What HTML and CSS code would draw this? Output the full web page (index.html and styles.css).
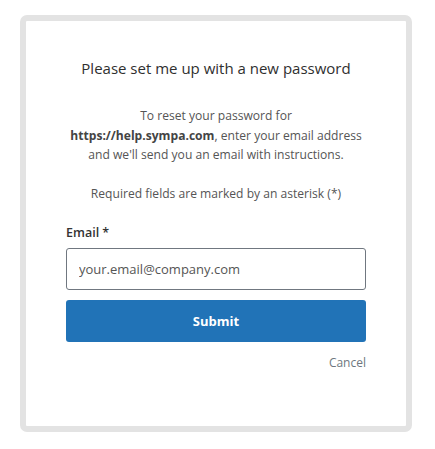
FILE: index.html
```html
<!DOCTYPE html>
<html lang="en">
<head>
<meta charset="utf-8">
<title>Reset password</title>
<link rel="stylesheet" href="styles.css">
</head>
<body>
<div class="card">
  <h1 class="title">Please set me up with a new password</h1>
  <p class="intro">To reset your password for<br><strong>https://help.sympa.com</strong>, enter your email address<br>and we'll send you an email with instructions.</p>
  <p class="required">Required fields are marked by an asterisk (*)</p>
  <label class="label" for="email">Email *</label>
  <input class="input" id="email" type="text" placeholder="your.email@company.com">
  <button class="submit" type="button">Submit</button>
  <div class="cancel-row"><a class="cancel" href="#">Cancel</a></div>
</div>
</body>
</html>
```
FILE: styles.css
```css
html, body {
  margin: 0;
  padding: 0;
  background: #ffffff;
}
body {
  font-family: "Open Sans", "Noto Sans", "Liberation Sans", sans-serif;
  color: #444;
}
.card {
  box-sizing: border-box;
  margin: 15px 0 0 20px;
  width: 392px;
  height: 417px;
  border: 6px solid #e3e3e3;
  border-radius: 7px;
  padding: 36px 40px 0 40px;
  display: flex;
  flex-direction: column;
}
.title {
  margin: 0;
  font-size: 15px;
  font-weight: 400;
  line-height: 22px;
  text-align: center;
  color: #2f2f2f;
}
.intro {
  margin: 27px 0 0;
  font-size: 12.1px;
  line-height: 19.5px;
  text-align: center;
  color: #555;
}
.intro strong {
  font-weight: 700;
  color: #444;
}
.required {
  margin: 19.5px 0 0;
  font-size: 12.1px;
  line-height: 19.5px;
  text-align: center;
  color: #555;
}
.label {
  margin-top: 19px;
  font-size: 12.5px;
  font-weight: 600;
  line-height: 20px;
  color: #333;
}
.input {
  box-sizing: border-box;
  margin-top: 5px;
  width: 100%;
  height: 42px;
  border: 1px solid #707780;
  border-radius: 3px;
  padding: 0 12px;
  font-family: inherit;
  font-size: 13px;
  color: #444;
  outline: none;
}
.input::placeholder {
  color: #555;
}
.submit {
  margin-top: 10px;
  width: 100%;
  height: 42px;
  border: none;
  border-radius: 3px;
  background: #2173b7;
  color: #fff;
  font-family: inherit;
  font-size: 13px;
  font-weight: 700;
}
.cancel-row {
  margin-top: 11px;
  display: flex;
  justify-content: flex-end;
}
.cancel {
  font-size: 12px;
  line-height: 20px;
  color: #6e7780;
  text-decoration: none;
}
```
